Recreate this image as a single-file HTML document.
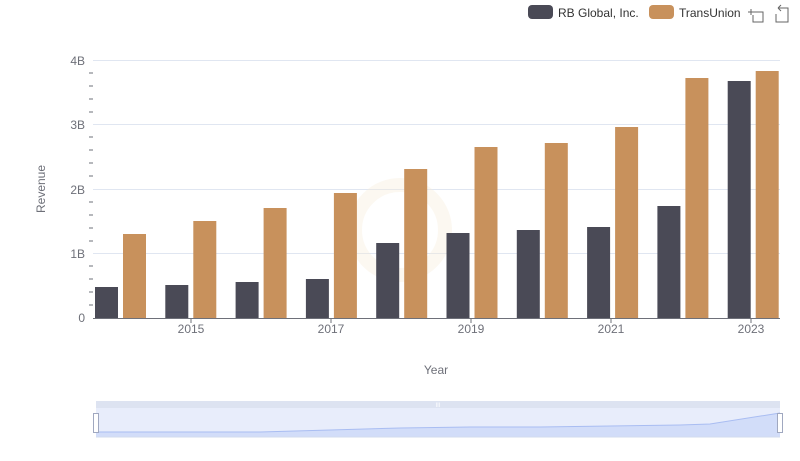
<!DOCTYPE html><html><head><style>body{margin:0;background:#fff}svg{display:block;font-family:"Liberation Sans",sans-serif}</style></head><body>
<svg width="800" height="461" viewBox="0 0 800 461">
<g stroke="#e0e6f1" stroke-width="1">
<line x1="93" x2="780" y1="60.5" y2="60.5"/><line x1="93" x2="780" y1="124.5" y2="124.5"/><line x1="93" x2="780" y1="189.5" y2="189.5"/><line x1="93" x2="780" y1="253.5" y2="253.5"/>
</g>
<g stroke="#6e7079" stroke-width="1">
<line x1="89" x2="93" y1="73" y2="73"/><line x1="89" x2="93" y1="86" y2="86"/><line x1="89" x2="93" y1="99" y2="99"/><line x1="89" x2="93" y1="112" y2="112"/>
<line x1="89" x2="93" y1="137" y2="137"/><line x1="89" x2="93" y1="150" y2="150"/><line x1="89" x2="93" y1="163" y2="163"/><line x1="89" x2="93" y1="176" y2="176"/>
<line x1="89" x2="93" y1="202" y2="202"/><line x1="89" x2="93" y1="215" y2="215"/><line x1="89" x2="93" y1="228" y2="228"/><line x1="89" x2="93" y1="241" y2="241"/>
<line x1="89" x2="93" y1="266" y2="266"/><line x1="89" x2="93" y1="279" y2="279"/><line x1="89" x2="93" y1="292" y2="292"/><line x1="89" x2="93" y1="305" y2="305"/>
<line x1="93" x2="780" y1="318.5" y2="318.5"/>
<line x1="191" x2="191" y1="318" y2="323"/><line x1="331" x2="331" y1="318" y2="323"/><line x1="471" x2="471" y1="318" y2="323"/><line x1="611" x2="611" y1="318" y2="323"/><line x1="751" x2="751" y1="318" y2="323"/>
</g>
<g fill="#6e7079" font-size="12" text-anchor="end">
<text x="85" y="65">4B</text><text x="85" y="129">3B</text><text x="85" y="194">2B</text><text x="85" y="258">1B</text><text x="85" y="322">0</text>
</g>
<g fill="#6e7079" font-size="12" text-anchor="middle">
<text x="191" y="333">2015</text><text x="331" y="333">2017</text><text x="471" y="333">2019</text><text x="611" y="333">2021</text><text x="751" y="333">2023</text>
<text x="436" y="374">Year</text>
<text transform="translate(45,189) rotate(-90)">Revenue</text>
</g>
<circle cx="400" cy="230" r="45" fill="none" stroke="#f6ead8" stroke-width="14" opacity="0.35"/>
<g fill="#4a4a56">
<rect x="95" y="287" width="23" height="31"/><rect x="165.3" y="285" width="23" height="33"/><rect x="235.6" y="282" width="23" height="36"/><rect x="305.9" y="279" width="23" height="39"/><rect x="376.2" y="243" width="23" height="75"/><rect x="446.5" y="233" width="23" height="85"/><rect x="516.8" y="230" width="23" height="88"/><rect x="587.1" y="227" width="23" height="91"/><rect x="657.4" y="206" width="23" height="112"/><rect x="727.7" y="81" width="23" height="237"/>
</g>
<g fill="#c8915c">
<rect x="123" y="234" width="23" height="84"/><rect x="193.3" y="221" width="23" height="97"/><rect x="263.6" y="208" width="23" height="110"/><rect x="333.9" y="193" width="23" height="125"/><rect x="404.2" y="169" width="23" height="149"/><rect x="474.5" y="147" width="23" height="171"/><rect x="544.8" y="143" width="23" height="175"/><rect x="615.1" y="127" width="23" height="191"/><rect x="685.4" y="78" width="23" height="240"/><rect x="755.7" y="71" width="23" height="247"/>
</g>
<rect x="528" y="5" width="25" height="14" rx="4" fill="#4a4a56"/>
<text x="558" y="17" font-size="12" fill="#333">RB Global, Inc.</text>
<rect x="649" y="5" width="25" height="14" rx="4" fill="#c8915c"/>
<text x="679" y="17" font-size="12" fill="#333">TransUnion</text>
<g fill="none" stroke="#666" stroke-width="1">
<path d="M748 12h6M751 9v6M753 12h10v10h-10v-7"/>
<path d="M778 8h10v14h-12v-8M778 8l3-3M778 8l3 3"/>
</g>
<rect x="96" y="401" width="684" height="36" fill="#e8edfb"/>
<rect x="96" y="401" width="684" height="7" fill="#dde3f1"/>
<path d="M96 432 L260 432 L330 430 L400 428 L470 427 L540 427 L610 426 L680 425 L710 424 L780 413 L780 437 L96 437Z" fill="#d2ddf9"/>
<path d="M96 432 L260 432 L330 430 L400 428 L470 427 L540 427 L610 426 L680 425 L710 424 L780 413" fill="none" stroke="#a9bdf2"/>
<line x1="96" x2="780" y1="437" y2="437" stroke="#d2dbee"/>
<rect x="93.5" y="413.5" width="5" height="19" fill="#fff" stroke="#a0a8c0"/>
<rect x="777.5" y="413.5" width="5" height="19" fill="#fff" stroke="#a0a8c0"/>
<text x="438" y="407" font-size="6" fill="#fff" text-anchor="middle">III</text>
</svg>
</body></html>
